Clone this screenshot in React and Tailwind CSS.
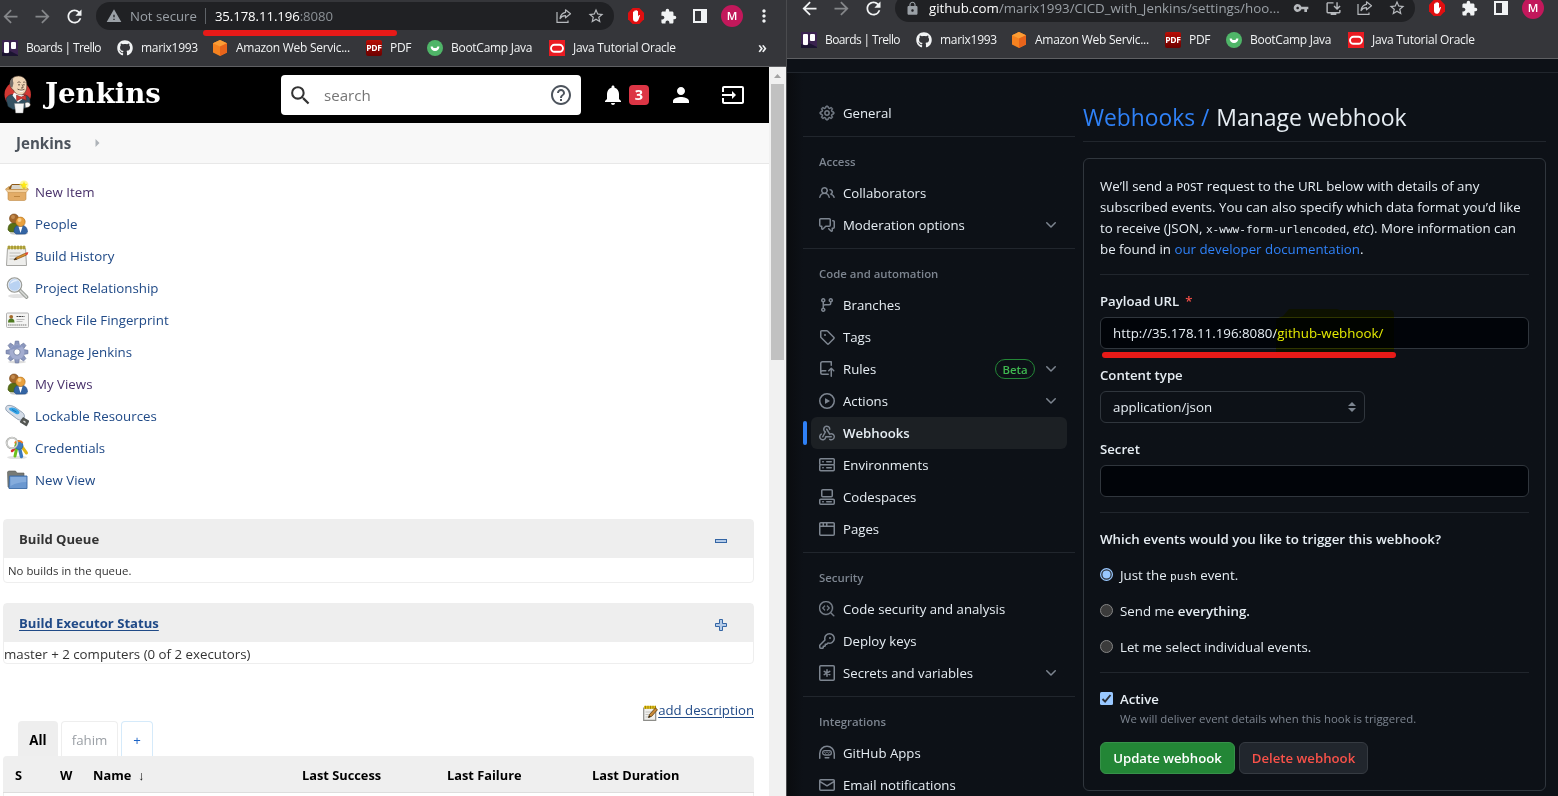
import React from "react";
import {
  MdArrowBack, MdArrowForward, MdRefresh, MdWarning, MdLock, MdStarBorder, MdExtension, MdMoreVert,
  MdVpnKey, MdSearch, MdHelpOutline, MdNotifications, MdPerson, MdInput, MdOutlineInstallDesktop,
} from "react-icons/md";
import { FaGithub } from "react-icons/fa";
import { GoGear, GoCodescan } from "react-icons/go";

/* ---------- browser chrome ---------- */

const TrelloIcon = () => (
  <svg width="16" height="16" viewBox="0 0 16 16">
    <rect width="16" height="16" fill="#3b2350" />
    <path d="M0 12l5 2 3-3 8 4v1H0z" fill="#1b1430" />
    <rect x="2" y="2" width="5" height="11" rx="1" fill="#fff" />
    <rect x="9" y="2" width="5" height="7" rx="1" fill="#fff" />
  </svg>
);
const AwsIcon = () => (
  <svg width="16" height="16" viewBox="0 0 16 16">
    <path d="M8 0l7 3.2v9.4L8 16l-7-3.4V3.2z" fill="#f58220" />
    <path d="M8 0l7 3.2L8 6.6 1 3.2z" fill="#fb9d35" />
    <path d="M8 6.6l7-3.4v9.4L8 16z" fill="#e8641b" />
  </svg>
);
const PdfIcon = () => (
  <div className="flex h-4 w-4 items-center justify-center rounded-[2px] bg-linear-to-b from-[#b80d05] to-[#6c0200] text-[8.5px] leading-4 font-bold tracking-[-0.2px] text-white">
    PDF
  </div>
);
const BootcampIcon = () => (
  <svg width="16" height="16" viewBox="0 0 16 16">
    <circle cx="8" cy="8" r="8" fill="#4fb568" />
    <path d="M3.600 6.500a4.400 4.600 0 0 0 8.800 0h-2.200a1.300 1.300 0 0 1-1.400 1.400h-1.600a1.300 1.300 0 0 1-1.400-1.400z" fill="#fff" />
  </svg>
);
const OracleIcon = () => (
  <svg width="16" height="16" viewBox="0 0 16 16">
    <rect width="16" height="16" fill="#ea1b22" />
    <rect x="2" y="4.800" width="12" height="7" rx="3.500" fill="none" stroke="#fff" strokeWidth="1.900" />
  </svg>
);
const ShareIcon = () => (
  <svg width="16" height="16" viewBox="0 0 16 16" fill="none" stroke="#b6b9bd" strokeWidth="1.200">
    <path d="M1 4v10.300h11V12.500" />
    <path d="M9.500 1.800l5 4-5 4V7.600C7 7.600 5.200 8.500 4 10.600c.4-3.400 2.200-5.700 5.500-6.300z" strokeLinejoin="round" />
  </svg>
);
const BlockIcon = () => (
  <svg width="16" height="16" viewBox="0 0 16 16">
    <path d="M4.700 0h6.600L16 4.700v6.600L11.300 16H4.700L0 11.300V4.700z" fill="#e00f10" />
    <path d="M5 6V4.200a.6.6 0 0 1 1.200 0V3.100a.65.65 0 0 1 1.300 0v-.5a.65.65 0 0 1 1.300 0v.7a.6.6 0 0 1 1.200 0v5.200l.8-1.200c.5-.7 1.400-.3 1.100.4L10.400 12c-.6 1.200-1.300 1.800-2.600 1.800C6 13.800 5 12.500 5 10.800z" fill="#fff" />
  </svg>
);
const PanelIcon = () => (
  <svg width="16" height="16" viewBox="0 0 16 16">
    <path d="M1 1h14v14H1zM3 3v10h6V3z" fill="#f1f3f4" fillRule="evenodd" />
  </svg>
);

const bookmarks = [
  { label: "Boards | Trello", icon: <TrelloIcon />, box: "w-[115px]" },
  { label: "marix1993", icon: <FaGithub size={16} />, box: "w-[95px]" },
  { label: "Amazon Web Servic...", icon: <AwsIcon />, box: "w-[154px]" },
  { label: "PDF", icon: <PdfIcon />, box: "w-[61px]" },
  { label: "BootCamp Java", icon: <BootcampIcon />, box: "w-[122px]" },
  { label: "Java Tutorial Oracle", icon: <OracleIcon />, box: "w-[160px]" },
];

function Bookmarks({ more }) {
  return (
    <div className="flex h-9 items-center pl-0.5 text-[12px] tracking-[-0.28px] text-[#f1f3f4]">
      {bookmarks.map((b) => (
        <div key={b.label} className={"flex shrink-0 items-center gap-2 whitespace-nowrap " + b.box}>
          {b.icon}
          <span className={b.label.startsWith("Boards") ? "tracking-[-0.6px]" : ""}>{b.label}</span>
        </div>
      ))}
      {more && <span className="-mt-0.5 ml-[49px] text-[16px] leading-4 font-semibold">»</span>}
    </div>
  );
}

const Slot = ({ children }) => <div className="flex w-8 shrink-0 items-center justify-center">{children}</div>;

function NavButtons({ dimBack }) {
  return (
    <>
      <div className="-ml-1.5 flex w-8 justify-center"><MdArrowBack size={21} color={dimBack ? "#85878a" : "#f1f3f4"} /></div>
      <Slot><MdArrowForward size={21} color="#85878a" /></Slot>
      <Slot><MdRefresh size={21} color="#f1f3f4" /></Slot>
    </>
  );
}

function Extensions() {
  return (
    <>
      <Slot><BlockIcon /></Slot>
      <Slot><MdExtension size={17} color="#f1f3f4" /></Slot>
      <Slot><PanelIcon /></Slot>
      <Slot>
        <div className="flex h-[22px] w-[22px] shrink-0 items-center justify-center rounded-full bg-[#c2185b] text-[11.5px] leading-4 font-semibold text-white">M</div>
      </Slot>
    </>
  );
}

/* ---------- Jenkins ---------- */

const JenkinsLogo = () => (
  <svg width="30" height="40" viewBox="0 0 30 40">
    <circle cx="14.700" cy="19.500" r="13.200" fill="#d33833" />
    <path d="M3 24c1.500-3.500 4.500-5 8-4.500l11 .5c4 .8 5.500 4 5 8l-4 5-13 1.500-5-3z" fill="#335061" stroke="#16262e" strokeWidth=".5" />
    <path d="M7.300 8.500C7 4.500 10.500 1 15.500 1s8.500 3.600 8.300 9c.2 4.500-1.300 8.500-4.600 9.800-3.200.8-7.200-1-8.700-4.800-2.200-.8-3.200-3.500-3.200-6.500z" fill="#f0d6b7" stroke="#49372b" strokeWidth=".6" />
    <path d="M7 10c-.8-3.500 1-6.500 3.500-7.500-.8 2-.7 3.600 0 5.500l-1 4.500c-1.200 0-2-.8-2.500-2.500z" fill="#77706a" />
    <path d="M14.500 7.500c1-.7 2-.7 3 0M20 7.500c.8-.6 1.700-.6 2.400.1M15 9.800h2M20 9.800h1.700M19 9.500c.6 1.400 1.300 2.300 1 3.300l-2 .2M14.500 14c2.200 1.500 4.800 1.500 7 .2" stroke="#49372b" strokeWidth=".8" fill="none" />
    <path d="M16 15.200c1.500.7 3.200.7 4.700 0l-.8 1.600h-3z" fill="#fff" />
    <path d="M11 17.500l-1.500 3 5.500 7 5-4 1-3.500c-3.500.5-7-.5-10-2.500z" fill="#f7f7f7" />
    <path d="M13.500 20.200l4.800 1.800 4.500-2 .4 5.200-4.700-1.700-4.800 2.200z" fill="#d33833" stroke="#81201c" strokeWidth=".6" />
    <path d="M11.500 28.500H21l-1 9.500h-7.300z" fill="#f5f5f5" stroke="#8d8d8d" strokeWidth=".4" />
    <path d="M22 28c2-1.500 4.800-.8 5.300 1.200.4 2-2 3.600-5 3.300z" fill="#f7f7f7" stroke="#49372b" strokeWidth=".4" />
  </svg>
);

const PackageIcon = () => (
  <svg width="24" height="24" viewBox="0 0 24 24">
    <path d="M4 7l3-3h10l3 3v3H4z" fill="#8f5a17" />
    <path d="M7 5h9l2 4H6z" fill="#d8d4cb" />
    <path d="M.7 9L4 6.500v3zM23.300 9L20 6.500v3z" fill="#e9b96e" stroke="#b37c35" strokeWidth=".5" />
    <path d="M3 10h18v9.500l-1.500 1h-15L3 19.500z" fill="#e3ac66" stroke="#c08a45" strokeWidth=".6" />
    <path d="M.5 9.500h23l-2.500 3H3z" fill="#f3cf9b" stroke="#c08a45" strokeWidth=".5" />
    <path d="M9 16h6v.8H9z" fill="#b37c35" />
    <circle cx="19" cy="5" r="4.500" fill="#fff36b" opacity=".65" />
    <path d="M19 1.200l1 2.500 2.600.3-2 1.700.7 2.600-2.300-1.400-2.300 1.400.7-2.600-2-1.700 2.600-.3z" fill="#fde913" />
  </svg>
);
const UsersIcon = () => (
  <svg width="24" height="24" viewBox="0 0 24 24">
    <ellipse cx="14" cy="21.500" rx="9" ry="1.500" fill="#ccc" />
    <path d="M3 18c0-5 2-7 6-7s6 2 6 6l-1 3H5z" fill="#587114" stroke="#3f5210" strokeWidth=".6" />
    <circle cx="9" cy="6.500" r="4.500" fill="#a4672b" stroke="#77471a" strokeWidth=".6" />
    <circle cx="8" cy="5" r="2" fill="#c48b4f" />
    <path d="M9 20c0-5 2-7 6.500-7s7 3 7 7l-2 2h-9.500z" fill="#3465a4" stroke="#204a87" strokeWidth=".6" />
    <path d="M13.500 14.500h4L15.500 21z" fill="#fff" />
    <circle cx="15.500" cy="9.800" r="4.700" fill="#e8a13f" stroke="#b46d12" strokeWidth=".6" />
    <circle cx="14.500" cy="8" r="2" fill="#f8ce8b" />
  </svg>
);
const NotepadIcon = () => (
  <svg width="24" height="24" viewBox="0 0 24 24">
    <path d="M2.500 4h18l1 17.500H1.500z" fill="#eeeeec" stroke="#9c9c98" strokeWidth=".9" />
    <path d="M2.500 2h18v3h-18z" fill="#cfc25a" />
    <path d="M4 1.500v4M7 1.500v4M10 1.500v4M13 1.500v4M16 1.500v4M19 1.500v4" stroke="#84791f" strokeWidth="1" />
    <path d="M4.500 9h11M4.500 12h9M4.500 15h6" stroke="#b5b5b2" strokeWidth=".9" />
    <path d="M9 16l2-2.500 8.500-4 2.500-.5-.7 2.200-9.300 4z" fill="#d89030" stroke="#7b4a0b" strokeWidth=".6" />
    <path d="M8.500 16l2.300-2.500 1.300 1.900z" fill="#403018" />
    <path d="M20 9l3.300-.9-.6 2.400-1.700.8z" fill="#df4837" />
  </svg>
);
const EditNoteIcon = () => (
  <svg width="15" height="16" viewBox="0 0 15 16">
    <path d="M.7 3h12v12.300H.7z" fill="#f0f0ee" stroke="#8d8d89" strokeWidth="1.200" />
    <path d="M2.500 7h7M2.500 9.500h5M2.500 12h4" stroke="#bcbcb8" strokeWidth=".9" />
    <path d="M1 .8h12v3H1z" fill="#e0bf1a" />
    <path d="M2.500.8v3M5 .8v3M7.500.8v3M10 .8v3M12.500.8v3" stroke="#8f7600" strokeWidth=".8" />
    <path d="M5.500 12.500l1-3L12.300 3l2.200 1.700-5.800 6.600z" fill="#c98a3a" stroke="#5f3c0a" strokeWidth=".8" />
    <path d="M5.300 12.800l.9-2.300 1.600 1.200z" fill="#222" />
  </svg>
);
const MagnifierIcon = () => (
  <svg width="24" height="24" viewBox="0 0 24 24">
    <ellipse cx="12" cy="20" rx="9" ry="2" fill="#e2e2e2" />
    <path d="M14.500 14l7 7" stroke="#8a8d88" strokeWidth="3.600" strokeLinecap="round" />
    <path d="M14.500 14l7 7" stroke="#d3d5d2" strokeWidth="2" strokeLinecap="round" />
    <circle cx="9.500" cy="9" r="7" fill="#b9d2f2" stroke="#999b96" strokeWidth="1.600" />
    <circle cx="9.500" cy="9" r="6.200" fill="none" stroke="#f0f4fa" strokeWidth=".8" />
    <path d="M5 8c1-4 6-5 8-3-3 0-5 1-8 3z" fill="#e7f0fc" />
  </svg>
);
const CardIcon = () => (
  <svg width="24" height="24" viewBox="0 0 24 24">
    <rect x="1.500" y="5" width="22" height="14.500" rx="1" fill="#f4f4f3" stroke="#aaa" strokeWidth=".9" />
    <circle cx="6.200" cy="8.800" r="1.900" fill="#a56a2c" />
    <path d="M3 14.500c0-3 1.300-4 3.300-4s3.200 1 3.200 4z" fill="#4e7a20" />
    <path d="M11.500 8.500h8" stroke="#444" strokeWidth="1.200" strokeDasharray="2 .5" />
    <path d="M11.500 11.500h8M11.500 13.500h6" stroke="#b0b0b0" strokeWidth=".8" />
    <path d="M3 17h19" stroke="#777" strokeWidth="1.200" strokeDasharray="1.500 .6" />
  </svg>
);
const GearIcon = () => (
  <svg width="24" height="24" viewBox="0 0 24 24">
    <ellipse cx="12" cy="22" rx="9" ry="1.400" fill="#ddd" />
    <g fill="#8b97bd" stroke="#5e6b93" strokeWidth=".5">
      {[0, 45, 90, 135].map((a) => (
        <path key={a} d="M10.300 1h3.400l.7 4v14l-.7 4h-3.400l-.7-4V5z" transform={`rotate(${a} 12 12)`} />
      ))}
    </g>
    <circle cx="12" cy="12" r="7.500" fill="#a4add0" />
    <path d="M5 10a7.300 7.300 0 0 1 12-3z" fill="#8795bf" />
    <circle cx="12" cy="12" r="3.200" fill="#fff" stroke="#66739b" strokeWidth=".8" />
  </svg>
);
const UsbIcon = () => (
  <svg width="24" height="24" viewBox="0 0 24 24">
    <path d="M.8 3.500C1.500.8 5.500.6 10 3.200l7.500 5.300c2.500 2 2.500 5.500.5 7-2.200 1.300-4.500.5-6.500-1L3 8C1 6.500.5 5.500.8 3.500z" fill="#d5dde8" stroke="#8090a5" strokeWidth=".8" />
    <path d="M4.500 4c3-1.500 7.500.5 9.500 3 1.500 2-.5 4-3 3L6 7C4 5.800 3.500 4.800 4.500 4z" fill="#35a3e6" />
    <path d="M7 5.500l4.500 2.500" stroke="#1873b5" strokeWidth="1" />
    <path d="M15 18l3-4.500 6 3.500-2.500 5z" fill="#555753" stroke="#2e3436" strokeWidth=".6" />
    <path d="M18.500 17l2 1.500" stroke="#ddd" strokeWidth="1.300" />
  </svg>
);
const KeysIcon = () => (
  <svg width="24" height="24" viewBox="0 0 24 24">
    <ellipse cx="12" cy="21.500" rx="10" ry="1.600" fill="#e2e2e2" />
    <path d="M15 8l6.500 9" stroke="#e0b817" strokeWidth="3" strokeLinecap="round" />
    <path d="M12 11l-5 4" stroke="#d92d2d" strokeWidth="2.500" strokeLinecap="round" />
    <path d="M12 11L10 20" stroke="#6fc01e" strokeWidth="3" strokeLinecap="round" />
    <path d="M14 10l2.500 10.500" stroke="#3c78bd" strokeWidth="3.400" strokeLinecap="round" />
    <circle cx="14" cy="9.500" r="4" fill="#3f7cc0" stroke="#265a94" strokeWidth=".6" />
    <path d="M10 7.500c1-3 6-3.500 7.500-.5" stroke="#f07c1e" strokeWidth="1.900" fill="none" />
    <path d="M10.500 11c-.3-2 .8-3.800 2.700-4" stroke="#6fc01e" strokeWidth="1.900" fill="none" />
    <circle cx="7" cy="7" r="5.400" fill="none" stroke="#9a9c98" strokeWidth="1.800" />
    <circle cx="7" cy="7" r="5.400" fill="none" stroke="#efefed" strokeWidth=".8" />
  </svg>
);
const FolderIcon = () => (
  <svg width="24" height="24" viewBox="0 0 24 24">
    <path d="M2.500 4l1-1h7l1.500 2h7v4h-14v11l-2-1z" fill="#777a75" stroke="#5a5c58" strokeWidth=".6" />
    <path d="M4.500 8h17.500v12.500h-18z" fill="#6b98d0" stroke="#3b6aa5" strokeWidth=".9" />
    <path d="M5.500 9h15.700v5c-6 0-10 1-15.700 4z" fill="#85acdc" />
  </svg>
);

const tasks = [
  { label: "New Item", icon: <PackageIcon />, color: "text-[#49326b]" },
  { label: "People", icon: <UsersIcon />, color: "text-[#204a87]" },
  { label: "Build History", icon: <NotepadIcon />, color: "text-[#204a87]" },
  { label: "Project Relationship", icon: <MagnifierIcon />, color: "text-[#204a87]" },
  { label: "Check File Fingerprint", icon: <CardIcon />, color: "text-[#204a87]" },
  { label: "Manage Jenkins", icon: <GearIcon />, color: "text-[#204a87]" },
  { label: "My Views", icon: <UsersIcon />, color: "text-[#49326b]" },
  { label: "Lockable Resources", icon: <UsbIcon />, color: "text-[#204a87]" },
  { label: "Credentials", icon: <KeysIcon />, color: "text-[#204a87]" },
  { label: "New View", icon: <FolderIcon />, color: "text-[#204a87]" },
];

function JenkinsPage() {
  return (
    <div className="flex min-h-0 flex-1">
      <div className="flex w-[769px] flex-col overflow-hidden bg-white text-[13.3px] text-[#333]">
        <header className="flex h-14 shrink-0 items-center bg-black text-white">
          <div className="flex w-[281px] items-center pl-[3px]">
            <JenkinsLogo />
            <span className="-mt-0.5 ml-[12px] font-['DejaVu_Serif',serif] text-[27.6px] leading-8 font-bold">Jenkins</span>
          </div>
          <div className="flex h-10 w-[300px] items-center rounded-[4px] bg-white pr-2 pl-[7px]">
            <MdSearch size={25} color="#333" />
            <span className="ml-[11px] flex-1 text-[15.1px] text-[#757575]">search</span>
            <MdHelpOutline size={24} color="#4d545d" />
          </div>
          <MdNotifications size={24} className="ml-5" />
          <div className="ml-1 flex h-5 w-5 items-center justify-center rounded-[4px] bg-[#dc3545] text-[14.5px] font-bold">3</div>
          <MdPerson size={24} className="ml-5" />
          <MdInput size={24} className="ml-7" />
        </header>
        <div className="flex h-[41px] shrink-0 items-center border-b border-[#e8e8e8] bg-[#f8f8f8] pl-4 font-bold text-[#4d545d]">
          <span className="w-[79px] text-[15.1px]">Jenkins</span>
          <svg width="5" height="8" viewBox="0 0 5 8"><path d="M.5 0l4 4-4 4z" fill="#aeb3b8" /></svg>
        </div>
        <nav className="flex flex-col pt-3 pl-[5px]">
          {tasks.map((t) => (
            <div key={t.label} className={"flex h-8 items-center gap-1.5 " + t.color}>
              {t.icon}
              <span className="mt-0.5">{t.label}</span>
            </div>
          ))}
        </nav>
        <div className="mt-[23px] ml-[3px] flex w-[751px] flex-col">
          <section className="flex h-16 flex-col rounded-[4px] border border-[#eee]">
            <div className="flex h-[38px] items-center justify-between bg-[#eee] pr-[26px] pl-[15px]">
              <b className="mt-0.5 text-[13.1px] font-bold">Build Queue</b>
              <div className="mt-1 h-1 w-3 border border-[#3465a4] bg-[#b4cbe8]" />
            </div>
            <div className="flex flex-1 items-center pt-0.5 pl-1 text-[11.4px]">No builds in the queue.</div>
          </section>
          <section className="mt-5 flex h-[61px] flex-col rounded-[4px] border border-[#eee]">
            <div className="flex h-[38px] shrink-0 items-center justify-between bg-[#eee] pr-[26px] pl-[15px]">
              <b className="mt-0.5 text-[13.1px] font-bold text-[#204a87] underline underline-offset-2">Build Executor Status</b>
              <svg width="12" height="12" viewBox="0 0 12 12" className="mt-1">
                <path d="M4.500.5h3v4h4v3h-4v4h-3v-4h-4v-3h4z" fill="#b4cbe8" stroke="#3465a4" />
              </svg>
            </div>
            <div className="flex flex-1 items-center pt-0.5 leading-[18px]">master + 2 computers (0 of 2 executors)</div>
          </section>
          <div className="mt-[37px] flex h-5 items-center justify-end text-[#204a87]">
            <div className="mt-[3px]"><EditNoteIcon /></div>
            <span className="text-[13.2px] underline underline-offset-2">add description</span>
          </div>
          <div className="flex h-[35px] gap-[3px] pl-[15px]">
            <div className="flex w-10 items-center justify-center rounded-t-[4px] bg-[#eee] pt-1 font-bold text-black">All</div>
            <div className="flex w-[57px] items-center justify-center rounded-t-[4px] border border-b-0 border-[#eee] pt-1 text-[#9a9fa5]">fahim</div>
            <div className="flex w-8 items-center justify-center rounded-t-[4px] border border-b-0 border-[#d5eafa] pt-1 text-[#1b63c6]">+</div>
          </div>
          <div className="flex h-[37px] shrink-0 items-center rounded-t-[4px] border-b border-[#ddd] bg-[#efefef] pt-1 pl-3 text-[12.8px] font-bold text-black">
            <span className="w-[45px]">S</span>
            <span className="w-[33px]">W</span>
            <span className="w-[209px]">Name&nbsp; <span className="font-normal">↓</span></span>
            <span className="w-[145px]">Last Success</span>
            <span className="w-[145px]">Last Failure</span>
            <span>Last Duration</span>
          </div>
          <div className="h-3 border-x border-[#eee]" />
        </div>
      </div>
      <div className="flex w-[17px] flex-col items-center bg-[#f1f1f1]">
        <svg width="17" height="17" viewBox="0 0 17 17"><path d="M5 11l3.500-4 3.500 4z" fill="#a3a3a3" /></svg>
        <div className="h-[276px] w-[13px] bg-[#c1c1c1]" />
      </div>
    </div>
  );
}

/* ---------- GitHub ---------- */

const glyph = (...paths) =>
  function Glyph() {
    return (
      <svg width="16" height="16" viewBox="0 0 16 16" fill="#7d8590" className="shrink-0">
        {paths.map((d) => <path key={d} d={d} />)}
      </svg>
    );
  };

const People = glyph("M2 5.500a3.500 3.500 0 1 1 5.898 2.549 5.508 5.508 0 0 1 3.034 4.084.75.75 0 1 1-1.482.235 4 4 0 0 0-7.900 0 .75.75 0 0 1-1.482-.236A5.507 5.507 0 0 1 3.102 8.050 3.493 3.493 0 0 1 2 5.500ZM11 4a3.001 3.001 0 0 1 2.220 5.018 5.010 5.010 0 0 1 2.560 3.012.749.749 0 0 1-.885.954.752.752 0 0 1-.549-.514 3.507 3.507 0 0 0-2.522-2.372.75.75 0 0 1-.574-.73v-.352a.75.75 0 0 1 .416-.672A1.500 1.500 0 0 0 11 5.500.75.75 0 0 1 11 4Zm-5.500-.5a2 2 0 1 0-.001 3.999A2 2 0 0 0 5.500 3.500Z");
const Discussion = glyph("M1.750 1h8.500c.966 0 1.750.784 1.750 1.750v5.500A1.750 1.750 0 0 1 10.250 10H7.061l-2.574 2.573A1.458 1.458 0 0 1 2 11.543V10h-.25A1.750 1.750 0 0 1 0 8.250v-5.500C0 1.784.784 1 1.750 1ZM1.500 2.750v5.500c0 .138.112.25.25.25h1a.75.75 0 0 1 .75.75v2.190l2.720-2.720a.749.749 0 0 1 .53-.22h3.500a.25.25 0 0 0 .25-.25v-5.500a.25.25 0 0 0-.25-.25h-8.500a.25.25 0 0 0-.25.25Zm13 2a.25.25 0 0 0-.25-.25h-.5a.75.75 0 0 1 0-1.500h.5c.966 0 1.750.784 1.750 1.750v5.500A1.750 1.750 0 0 1 14.250 12H14v1.543a1.458 1.458 0 0 1-2.487 1.030L9.220 12.280a.749.749 0 0 1 .326-1.275.749.749 0 0 1 .734.215l2.220 2.220v-2.190a.75.75 0 0 1 .75-.75h1a.25.25 0 0 0 .25-.25Z");
const Branch = glyph("M9.500 3.250a2.250 2.250 0 1 1 3 2.122V6A2.500 2.500 0 0 1 10 8.500H6a1 1 0 0 0-1 1v1.128a2.251 2.251 0 1 1-1.500 0V5.372a2.250 2.250 0 1 1 1.500 0v1.836A2.493 2.493 0 0 1 6 7h4a1 1 0 0 0 1-1v-.628A2.250 2.250 0 0 1 9.500 3.250Zm-6 0a.75.75 0 1 0 1.500 0 .75.75 0 0 0-1.500 0Zm8.250-.75a.75.75 0 1 0 0 1.500.75.75 0 0 0 0-1.500ZM4.250 12a.75.75 0 1 0 0 1.500.75.75 0 0 0 0-1.500Z");
const Tag = glyph("M1 7.775V2.750C1 1.784 1.784 1 2.750 1h5.025c.464 0 .91.184 1.238.513l6.250 6.250a1.750 1.750 0 0 1 0 2.474l-5.026 5.026a1.750 1.750 0 0 1-2.474 0l-6.250-6.250A1.752 1.752 0 0 1 1 7.775Zm1.500 0c0 .066.026.13.073.177l6.250 6.250a.25.25 0 0 0 .354 0l5.025-5.025a.25.25 0 0 0 0-.354l-6.250-6.250a.25.25 0 0 0-.177-.073H2.750a.25.25 0 0 0-.25.25ZM6 5a1 1 0 1 1 0 2 1 1 0 0 1 0-2Z");
const RepoPush = glyph("M1 2.500A2.500 2.500 0 0 1 3.500 0h8.750a.75.75 0 0 1 .75.75v3.500a.75.75 0 0 1-1.500 0V1.500h-8a1 1 0 0 0-1 1v6.708A2.493 2.493 0 0 1 3.500 9h3.250a.75.75 0 0 1 0 1.500H3.500a1 1 0 0 0 0 2h5.750a.75.75 0 0 1 0 1.500H3.500A2.500 2.500 0 0 1 1 11.500Zm13.230 7.790h-.001l-1.224-1.224v6.184a.75.75 0 0 1-1.500 0V9.066L10.280 10.290a.75.75 0 0 1-1.060-1.061l2.505-2.504a.75.75 0 0 1 1.060 0L15.290 9.230a.751.751 0 0 1-.018 1.042.751.751 0 0 1-1.042.018Z");
const Play = glyph("M8 0a8 8 0 1 1 0 16A8 8 0 0 1 8 0ZM1.500 8a6.500 6.500 0 1 0 13 0 6.500 6.500 0 0 0-13 0Zm4.879-2.773 4.264 2.559a.25.25 0 0 1 0 .428l-4.264 2.559A.25.25 0 0 1 6 10.559V5.442a.25.25 0 0 1 .379-.215Z");
const Webhook = glyph(
  "M5.500 4.250a2.250 2.250 0 0 1 4.500 0 .75.75 0 0 0 1.500 0 3.750 3.750 0 1 0-6.140 2.889l-2.272 4.258a.75.75 0 0 0 1.324.706L7 7.250a.75.75 0 0 0-.309-1.015A2.250 2.250 0 0 1 5.500 4.250Z",
  "M7.364 3.607a.75.75 0 0 1 1.030.257l2.608 4.349a3.750 3.750 0 1 1-.628 6.785.75.75 0 0 1 .752-1.299 2.250 2.250 0 1 0-.033-3.880.75.75 0 0 1-1.030-.256L7.107 4.636a.75.75 0 0 1 .257-1.030Z",
  "M2.900 8.776A.75.75 0 0 1 2.625 9.800 2.250 2.250 0 1 0 6 11.750a.75.75 0 0 1 .75-.751h5.500a.75.75 0 0 1 0 1.500H7.425a3.751 3.751 0 1 1-5.550-3.998.75.75 0 0 1 1.024.274Z"
);
const Server = glyph("M1.750 1h12.500c.966 0 1.750.784 1.750 1.750v4c0 .372-.116.717-.314 1 .198.283.314.628.314 1v4a1.750 1.750 0 0 1-1.750 1.750H1.750A1.750 1.750 0 0 1 0 12.750v-4c0-.358.109-.707.314-1a1.739 1.739 0 0 1-.314-1v-4C0 1.784.784 1 1.750 1ZM1.500 2.750v4c0 .138.112.25.25.25h12.500a.25.25 0 0 0 .25-.25v-4a.25.25 0 0 0-.25-.25H1.750a.25.25 0 0 0-.25.25Zm.25 5.750a.25.25 0 0 0-.25.25v4c0 .138.112.25.25.25h12.500a.25.25 0 0 0 .25-.25v-4a.25.25 0 0 0-.25-.25ZM7 4.750A.75.75 0 0 1 7.750 4h4.500a.75.75 0 0 1 0 1.500h-4.500A.75.75 0 0 1 7 4.750ZM7.750 10h4.500a.75.75 0 0 1 0 1.500h-4.500a.75.75 0 0 1 0-1.500ZM3 4.750A.75.75 0 0 1 3.750 4h.5a.75.75 0 0 1 0 1.500h-.5A.75.75 0 0 1 3 4.750ZM3.750 10h.5a.75.75 0 0 1 0 1.500h-.5a.75.75 0 0 1 0-1.500Z");
const Codespaces = glyph(
  "M0 11.250c0-.966.784-1.750 1.750-1.750h12.500c.966 0 1.750.784 1.750 1.750v3A1.750 1.750 0 0 1 14.250 16H1.750A1.750 1.750 0 0 1 0 14.250Zm2-9.500C2 .784 2.784 0 3.750 0h8.500C13.216 0 14 .784 14 1.750v5a1.750 1.750 0 0 1-1.750 1.750h-8.500A1.750 1.750 0 0 1 2 6.750Zm1.750-.25a.25.25 0 0 0-.25.25v5c0 .138.112.25.25.25h8.500a.25.25 0 0 0 .25-.25v-5a.25.25 0 0 0-.25-.25Zm-2 9.500a.25.25 0 0 0-.25.25v3c0 .138.112.25.25.25h12.500a.25.25 0 0 0 .25-.25v-3a.25.25 0 0 0-.25-.25Z",
  "M7 12.750a.75.75 0 0 1 .75-.75h4.500a.75.75 0 0 1 0 1.500h-4.500a.75.75 0 0 1-.75-.75Zm-4 0a.75.75 0 0 1 .75-.75h.5a.75.75 0 0 1 0 1.500h-.5a.75.75 0 0 1-.75-.75Z"
);
const Browser = glyph("M0 2.750C0 1.784.784 1 1.750 1h12.500c.966 0 1.750.784 1.750 1.750v10.500A1.750 1.750 0 0 1 14.250 15H1.750A1.750 1.750 0 0 1 0 13.250ZM14.500 6h-13v7.250c0 .138.112.25.25.25h12.500a.25.25 0 0 0 .25-.25Zm-6-3.500v2h6V2.750a.25.25 0 0 0-.25-.25ZM5 2.500v2h2v-2Zm-3.250 0a.25.25 0 0 0-.25.25V4.500h2v-2Z");
const Key = glyph("M10.500 0a5.499 5.499 0 1 1-1.288 10.848l-.932.932a.749.749 0 0 1-.53.22H7v.75a.749.749 0 0 1-.22.53l-.5.5a.749.749 0 0 1-.53.22H5v.75a.749.749 0 0 1-.22.53l-.5.5a.749.749 0 0 1-.53.22h-2A1.750 1.750 0 0 1 0 14.250v-2c0-.199.079-.389.22-.53l4.932-4.932A5.500 5.500 0 0 1 10.500 0Zm-4 5.500c-.001.431.069.86.205 1.269a.75.75 0 0 1-.181.768L1.500 12.560v1.690c0 .138.112.25.25.25h1.690l.06-.06v-1.190a.75.75 0 0 1 .75-.75h1.190l.06-.06v-1.190a.75.75 0 0 1 .75-.75h1.190l1.023-1.025a.75.75 0 0 1 .768-.18A4 4 0 1 0 6.500 5.500ZM11 6a1 1 0 1 1 0-2 1 1 0 0 1 0 2Z");
const Mail = glyph("M1.750 2h12.500c.966 0 1.750.784 1.750 1.750v8.500A1.750 1.750 0 0 1 14.250 14H1.750A1.750 1.750 0 0 1 0 12.250v-8.500C0 2.784.784 2 1.750 2ZM1.500 12.251c0 .138.112.25.25.25h12.500a.25.25 0 0 0 .25-.25V5.809L8.380 9.397a.75.75 0 0 1-.76 0L1.500 5.809v6.442Zm13-8.181v-.32a.25.25 0 0 0-.25-.25H1.750a.25.25 0 0 0-.25.25v.32L8 7.880Z");
const ChevronDown = glyph("M12.780 5.220a.749.749 0 0 1 0 1.060l-4.250 4.250a.749.749 0 0 1-1.060 0L3.220 6.280a.749.749 0 1 1 1.060-1.060L8 8.939l3.720-3.719a.749.749 0 0 1 1.060 0Z");

const Gear = () => <GoGear size={16} color="#7d8590" stroke="#7d8590" strokeWidth={0.6} />;
const Codescan = () => <GoCodescan size={16} color="#7d8590" stroke="#7d8590" strokeWidth={0.6} />;
const Hubot = () => (
  <svg width="16" height="16" viewBox="0 0 16 16" fill="none" stroke="#7d8590" strokeLinecap="round">
    <path d="M.75 13.200V8.500a7.250 7.250 0 0 1 14.500 0v4.700" strokeWidth="1.500" />
    <rect x="3.700" y="5.700" width="8.600" height="4.300" rx="2" strokeWidth="1.300" />
    <path d="M5.500 7.300l1 .9 1-.9M8.500 7.300l1 .9 1-.9" strokeWidth="1" />
    <path d="M6.200 12.700h3.600" strokeWidth="1.500" />
  </svg>
);
const KeyAsterisk = () => (
  <svg width="16" height="16" viewBox="0 0 16 16" fill="none" stroke="#7d8590" strokeWidth="1.500">
    <rect x=".75" y=".75" width="14.500" height="14.500" rx="1" />
    <path d="M8 4.700v6.600M5.200 6.300l5.600 3.400M10.800 6.300L5.200 9.700" strokeLinecap="round" />
  </svg>
);

const settings = [
  { items: [{ label: "General", Icon: Gear }] },
  {
    title: "Access",
    items: [{ label: "Collaborators", Icon: People }, { label: "Moderation options", Icon: Discussion, more: true }],
  },
  {
    title: "Code and automation",
    items: [
      { label: "Branches", Icon: Branch },
      { label: "Tags", Icon: Tag },
      { label: "Rules", Icon: RepoPush, more: true, beta: true },
      { label: "Actions", Icon: Play, more: true },
      { label: "Webhooks", Icon: Webhook, active: true },
      { label: "Environments", Icon: Server },
      { label: "Codespaces", Icon: Codespaces },
      { label: "Pages", Icon: Browser },
    ],
  },
  {
    title: "Security",
    items: [
      { label: "Code security and analysis", Icon: Codescan },
      { label: "Deploy keys", Icon: Key },
      { label: "Secrets and variables", Icon: KeyAsterisk, more: true },
    ],
  },
  { title: "Integrations", items: [{ label: "GitHub Apps", Icon: Hubot }, { label: "Email notifications", Icon: Mail }] },
];

function SettingsNav() {
  return (
    <nav className="flex w-[272px] shrink-0 flex-col pt-6">
      {settings.map((group, i) => (
        <div key={i} className={i ? "mt-[7px] border-t border-[#21262d] pt-2" : ""}>
          {group.title && <div className="flex h-8 items-center pt-0.5 pl-4 text-[11.4px] font-semibold text-[#7d8590]">{group.title}</div>}
          {group.items.map(({ label, Icon, more, beta, active }) => (
            <div key={label} className="flex h-8 items-center">
              <div className={"h-6 w-1 rounded-[6px] " + (active ? "bg-[#2f81f7]" : "")} />
              <div className={"ml-1 flex h-8 w-64 items-center rounded-md px-2 " + (active ? "bg-[#1c2024] font-semibold" : "")}>
                <Icon />
                <span className="mt-0.5 ml-2 flex-1">{label}</span>
                {beta && <span className="mr-2 flex h-5 w-10 items-center justify-center rounded-full border border-[#238636] pt-0.5 text-[11.4px] font-semibold text-[#3fb950]">Beta</span>}
                {more && <ChevronDown />}
              </div>
            </div>
          ))}
        </div>
      ))}
    </nav>
  );
}

const Radio = ({ on }) => (
  <svg width="13" height="13" viewBox="0 0 13 13" className="-mt-0.5 mr-[7px]">
    {on ? (
      <>
        <circle cx="6.500" cy="6.500" r="5.900" fill="#2b2f36" stroke="#99c8ff" strokeWidth="1.200" />
        <circle cx="6.500" cy="6.500" r="4" fill="#99c8ff" />
      </>
    ) : (
      <circle cx="6.500" cy="6.500" r="6" fill="#3b3b3b" stroke="#858585" />
    )}
  </svg>
);

const Code = ({ children }) => <code className="font-['DejaVu_Sans_Mono',monospace] text-[11.1px] leading-none">{children}</code>;

function WebhookForm() {
  return (
    <main className="ml-2 flex w-[463px] shrink-0 flex-col pt-6">
      <h1 className="h-[45px] border-b border-[#21262d] text-[22.8px] leading-10 whitespace-pre">
        <span className="text-[#2f81f7]">Webhooks / </span><span className="ml-px text-[23px]">Manage webhook</span>
      </h1>
      <div className="mt-4 flex h-[633px] flex-col rounded-md border border-[#30363d] px-4 pt-4 text-[13.3px]">
        <p className="h-[84px] pt-px leading-[21px] whitespace-nowrap">
          We’ll send a <Code>POST</Code> request to the URL below with details of any<br />
          subscribed events. You can also specify which data format you’d like<br />
          to receive (JSON, <Code>x-www-form-urlencoded</Code>, <i>etc</i>). More information can<br />
          be found in <span className="text-[#2f81f7]">our developer documentation</span>.
        </p>
        <hr className="mt-[15px] border-[#21262d]" />
        <div className="mt-4 flex h-[21px] items-center text-[13.2px] font-semibold">Payload URL <span className="ml-1.5 text-[#f85149]">*</span></div>
        <div className="relative mt-[5px] flex h-8 items-center rounded-md border border-[#30363d] bg-[#010409] px-3 pt-0.5">
          http://35.178.11.196:8080/github-webhook/
          <svg className="absolute -top-[10px] left-[174px] mix-blend-multiply" width="120" height="44" viewBox="0 0 120 44">
            <path d="M1 44V11L8 8 14 1H62l3 1h50q4 0 4 4V44z" fill="#ffff00" />
          </svg>
          <div className="absolute top-[34px] left-[1px] h-1.5 w-[294px] rounded-full bg-[#e71a18]" />
        </div>
        <div className="mt-4 flex h-[21px] items-center text-[13.2px] font-semibold">Content type</div>
        <div className="mt-[5px] flex h-8 w-[265px] items-center justify-between rounded-md border border-[#30363d] pr-2 pl-3">
          <span className="mt-0.5">application/json</span>
          <svg width="8" height="10" viewBox="0 0 8 10"><path d="M0 4l4-4 4 4zM0 6h8l-4 4z" fill="#7d8590" /></svg>
        </div>
        <div className="mt-4 flex h-[21px] items-center text-[13.2px] font-semibold">Secret</div>
        <div className="mt-[5px] h-8 rounded-md border border-[#30363d] bg-[#010409]" />
        <hr className="mt-[15px] border-[#21262d]" />
        <div className="mt-4 flex h-[21px] items-center font-semibold">Which events would you like to trigger this webhook?</div>
        <div className="mt-[15px] flex h-[21px] items-center"><Radio on />Just the&nbsp;<span className="mt-0.5 flex"><Code>push</Code></span>&nbsp;event.</div>
        <div className="mt-[15px] flex h-[21px] items-center"><Radio />Send me&nbsp;<b className="font-semibold">everything.</b></div>
        <div className="mt-[15px] flex h-[21px] items-center text-[13.2px]"><Radio />Let me select individual events.</div>
        <hr className="mt-[14px] border-[#21262d]" />
        <div className="mt-4 flex h-[21px] items-center text-[13.2px] font-semibold">
          <svg width="13" height="13" viewBox="0 0 13 13" className="-mt-0.5 mr-[7px]">
            <rect width="13" height="13" rx="1.500" fill="#99c8ff" />
            <path d="M2.500 7l2.600 2.600L10.500 3" stroke="#2b2f36" strokeWidth="1.900" fill="none" />
          </svg>
          Active
        </div>
        <div className="flex h-[18px] items-center pl-5 text-[11.4px] text-[#7d8590]">We will deliver event details when this hook is triggered.</div>
        <div className="mt-3.5 flex gap-1 text-[13.2px] font-semibold">
          <button className="h-8 w-[135px] rounded-md border border-[#37914a] bg-[#238636] pt-0.5 text-white">Update webhook</button>
          <button className="h-8 w-[129px] rounded-md border border-[#363b42] bg-[#21262d] pt-0.5 text-[#f85149]">Delete webhook</button>
        </div>
      </div>
    </main>
  );
}

export default function App() {
  return (
    <div className="flex h-[796px] w-[1558px] overflow-hidden font-['Open_Sans','Noto_Sans',sans-serif]">
      <div className="relative flex w-[787px] shrink-0 flex-col border-r border-[#4a4b4e] bg-[#35363a]">
        <div className="flex h-8 shrink-0 items-center text-[13.2px]">
          <NavButtons dimBack />
          <div className="ml-1.5 flex h-7 w-[518px] shrink-0 items-center rounded-full bg-[#202124] pl-2.5">
            <MdWarning size={16} color="#9aa0a6" />
            <span className="mt-0.5 ml-2 text-[#9aa0a6]">Not secure</span>
            <div className="ml-2 h-4 w-px bg-[#5f6368]" />
            <span className="mt-0.5 ml-[9px] flex-1 tracking-[-0.08px] text-white">35.178.11.196<span className="text-[#8b9095]">:8080</span></span>
            <Slot><ShareIcon /></Slot>
            <Slot><MdStarBorder size={18} color="#b6b9bd" /></Slot>
            <div className="w-[2px]" />
          </div>
          <div className="w-1.5" />
          <Extensions />
          <Slot><MdMoreVert size={20} color="#f1f3f4" /></Slot>
        </div>
        <div className="h-[35px] shrink-0 border-b border-[#5f6063]">
          <div className="-mt-0.5"><Bookmarks more /></div>
        </div>
        <div className="absolute top-[30px] left-[203px] h-1.5 w-[194px] rounded-full bg-[#e71a18]" />
        <JenkinsPage />
      </div>

      <div className="flex w-[771px] shrink-0 flex-col bg-[#0d1117] text-[13.2px] text-[#e6edf3]">
        <div className="flex h-[59px] shrink-0 flex-col border-b border-[#5f6063] bg-[#35363a] pl-3">
          <div className="-mt-2 flex h-8 shrink-0 items-center">
            <NavButtons />
            <div className="ml-1.5 flex h-7 w-[520px] shrink-0 items-center rounded-full bg-[#202124] pl-2.5">
              <MdLock size={15} color="#9aa0a6" />
              <span className="ml-[9px] flex-1 text-[13.3px] leading-[14px] whitespace-nowrap text-[#9aa0a6]"><span className="text-white">github.com</span>/marix1993/CICD_with_Jenkins/settings/hoo...</span>
              <Slot><MdVpnKey size={16} color="#b6b9bd" /></Slot>
              <Slot><MdOutlineInstallDesktop size={17} color="#b6b9bd" /></Slot>
              <Slot><ShareIcon /></Slot>
              <Slot><MdStarBorder size={18} color="#b6b9bd" /></Slot>
              <div className="w-[2px]" />
            </div>
            <div className="w-1.5" />
            <Extensions />
          </div>
          <div className="-mt-0.5"><Bookmarks /></div>
        </div>
        <div className="h-[14px] shrink-0 border-b border-[#21262d]" />
        <div className="flex min-h-0 flex-1 overflow-hidden bg-linear-to-r from-[#0a0c0f] to-[#0d1117] to-[16px] pl-4">
          <SettingsNav />
          <WebhookForm />
        </div>
      </div>
    </div>
  );
}
